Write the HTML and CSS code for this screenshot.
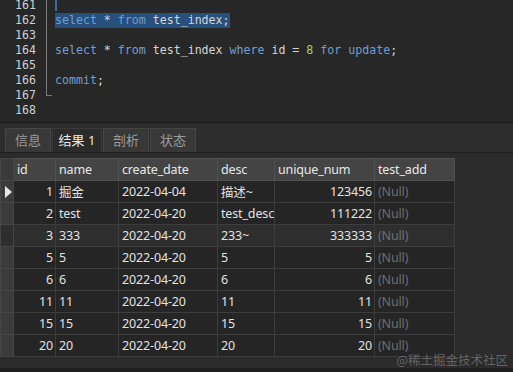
FILE: index.html
```html
<!DOCTYPE html>
<html lang="zh-CN">
<head>
    <meta charset="UTF-8">
    <title>test_index</title>
    <link rel="stylesheet" href="styles.css">
</head>
<body>
    <div class="editor">
        <div class="gutter">
            <div>161</div>
            <div>162</div>
            <div>163</div>
            <div>164</div>
            <div>165</div>
            <div>166</div>
            <div>167</div>
            <div>168</div>
        </div>
        <div class="fold"></div>
        <div class="code">
            <div class="line"><span class="caret"></span></div>
            <div class="line"><span class="sel"><span class="kw">select</span> * <span class="kw">from</span> test_index;</span></div>
            <div class="line"></div>
            <div class="line"><span class="kw">select</span> * <span class="kw">from</span> test_index <span class="kw">where</span> id = <span class="num">8</span> <span class="kw">for</span> <span class="kw">update</span>;</div>
            <div class="line"></div>
            <div class="line"><span class="kw">commit</span>;</div>
            <div class="line"></div>
            <div class="line"></div>
        </div>
    </div>

    <div class="tabs">
        <div class="tab">信息</div>
        <div class="tab active">结果 1</div>
        <div class="tab">剖析</div>
        <div class="tab">状态</div>
    </div>

    <div class="result">
        <table class="grid">
            <colgroup>
                <col style="width:13px">
                <col style="width:42px">
                <col style="width:63px">
                <col style="width:99px">
                <col style="width:57px">
                <col style="width:100px">
                <col style="width:80px">
            </colgroup>
            <thead>
                <tr>
                    <th class="ind"></th>
                    <th>id</th>
                    <th>name</th>
                    <th>create_date</th>
                    <th>desc</th>
                    <th>unique_num</th>
                    <th>test_add</th>
                </tr>
            </thead>
            <tbody>
                <tr><td class="ind"><span class="arrow"></span></td><td class="r">1</td><td>掘金</td><td>2022-04-04</td><td>描述~</td><td class="r">123456</td><td class="null">(Null)</td></tr>
                <tr><td class="ind"></td><td class="r">2</td><td>test</td><td>2022-04-20</td><td>test_desc</td><td class="r">111222</td><td class="null">(Null)</td></tr>
                <tr class="hover"><td class="ind"></td><td class="r">3</td><td>333</td><td>2022-04-20</td><td>233~</td><td class="r">333333</td><td class="null">(Null)</td></tr>
                <tr><td class="ind"></td><td class="r">5</td><td>5</td><td>2022-04-20</td><td>5</td><td class="r">5</td><td class="null">(Null)</td></tr>
                <tr><td class="ind"></td><td class="r">6</td><td>6</td><td>2022-04-20</td><td>6</td><td class="r">6</td><td class="null">(Null)</td></tr>
                <tr><td class="ind"></td><td class="r">11</td><td>11</td><td>2022-04-20</td><td>11</td><td class="r">11</td><td class="null">(Null)</td></tr>
                <tr><td class="ind"></td><td class="r">15</td><td>15</td><td>2022-04-20</td><td>15</td><td class="r">15</td><td class="null">(Null)</td></tr>
                <tr><td class="ind"></td><td class="r">20</td><td>20</td><td>2022-04-20</td><td>20</td><td class="r">20</td><td class="null">(Null)</td></tr>
            </tbody>
        </table>
        <div class="statusbar"></div>
    </div>

    <div class="watermark">@稀土掘金技术社区</div>
</body>
</html>
```

FILE: styles.css
```css
body {
    margin: 0;
    width: 513px;
    height: 372px;
    overflow: hidden;
    background-color: #2b2b2b;
    font-family: "Noto Sans", "Noto Sans CJK SC", sans-serif;
    position: relative;
}

/* SQL editor */
.editor {
    display: flex;
    height: 122px;
    background-color: #272727;
    overflow: hidden;
    font-family: "DejaVu Sans Mono", monospace;
    font-size: 11.6px;
}
.gutter {
    width: 36px;
    margin-top: -2px;
    text-align: right;
    color: #cfcfcf;
}
.gutter div,
.line {
    height: 15px;
    line-height: 15px;
    white-space: pre;
}
.fold {
    width: 5px;
    height: 95px;
    margin-left: 10px;
    border-left: 1px solid #7a7a7a;
    border-bottom: 1px solid #7a7a7a;
}
.code {
    margin-left: 3px;
    margin-top: -2px;
    color: #d6d6d6;
}
.kw {
    color: #6c9fd3;
}
.num {
    color: #a8cf5c;
}
.sel {
    display: inline-block;
    background-color: #27507c;
    height: 15px;
}
.caret {
    display: inline-block;
    width: 2px;
    height: 11px;
    vertical-align: top;
    margin-top: 2px;
    background-color: #3d6d9e;
}

/* result tabs */
.tabs {
    display: flex;
    height: 24px;
    padding: 5px 0 0 5px;
    background-color: #2d2d2d;
    border-top: 1px solid #1c1c1c;
    border-bottom: 1px solid #1f1f1f;
}
.tab {
    width: 46px;
    margin-right: 1px;
    background-color: #383838;
    border: 1px solid #454545;
    border-bottom: none;
    color: #9a9a9a;
    font-size: 13px;
    line-height: 22px;
    text-align: center;
    box-sizing: border-box;
}
.tab.active {
    width: 50px;
    background-color: #2b2b2b;
    border-color: #3a3a3a;
    color: #e6e6e6;
}

/* data grid */
.result {
    padding-top: 5px;
}
.grid {
    width: 454px;
    table-layout: fixed;
    border-collapse: collapse;
    font-size: 12.5px;
    letter-spacing: -0.15px;
    color: #e2e2e2;
}
.grid th,
.grid td {
    height: 21px;
    padding: 0 2px 0 3px;
    border: 1px solid #3d3d3d;
    white-space: nowrap;
    text-align: left;
    font-weight: normal;
}
.grid th {
    background-color: #444444;
    border-color: #505050;
    color: #e8e8e8;
}
.grid td {
    background-color: #252525;
}
.grid tr.hover td {
    background-color: #2e2e2e;
}
.grid .ind {
    padding: 0;
    background-color: #3b3b3b;
    border-color: #454545;
}
.grid th.ind {
    background-color: #3a3a3a;
}
.grid .r {
    text-align: right;
}
.grid .null {
    color: #6e6e6e;
}
.arrow {
    display: block;
    width: 0;
    height: 0;
    margin-left: 4px;
    border-top: 6px solid transparent;
    border-bottom: 6px solid transparent;
    border-left: 7px solid #e6e6e6;
}
.statusbar {
    height: 10px;
    margin-top: 11px;
    background-color: #1f1f1f;
}

.watermark {
    position: absolute;
    right: 5px;
    bottom: 3px;
    font-size: 12.5px;
    color: rgba(150, 150, 150, 0.55);
    font-family: "Noto Sans CJK SC", sans-serif;
}
```
